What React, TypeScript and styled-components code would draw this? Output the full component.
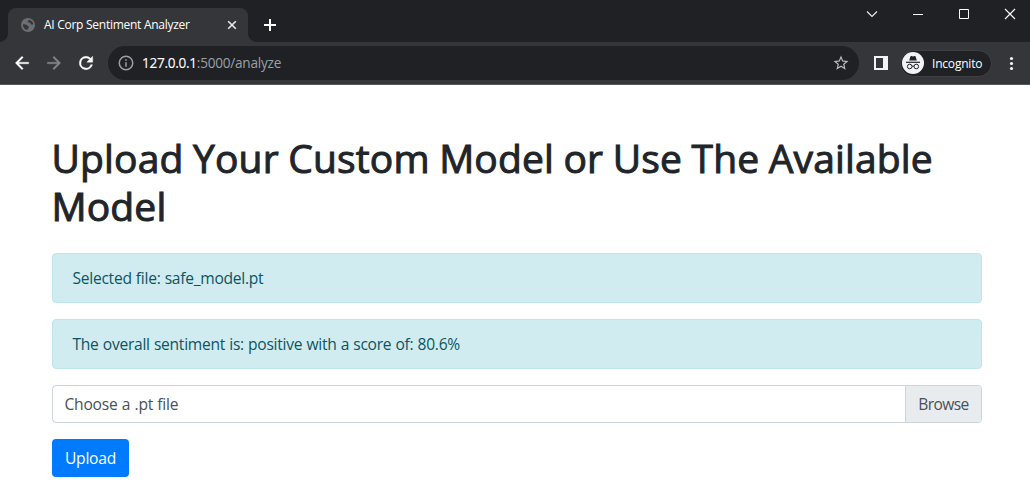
import React from "react";
import styled, { createGlobalStyle } from "styled-components";

const GlobalStyle = createGlobalStyle`
  * { box-sizing: border-box; }
  body { margin: 0; background: #fff; font-family: "Segoe UI", "Open Sans", "Noto Sans", sans-serif; }
`;

const Window = styled.div`
  width: 1030px;
  height: 499px;
  overflow: hidden;
  background: #fff;
`;

const TabStrip = styled.header`
  display: flex;
  height: 42px;
  padding-left: 8px;
  background: #202124;
`;

const Tab = styled.div`
  position: relative;
  display: flex;
  align-items: center;
  width: 240px;
  height: 34px;
  margin-top: 8px;
  padding: 0 11px 0 13px;
  border-radius: 8px 8px 0 0;
  background: #35363a;
  color: #fff;
  &::before,
  &::after {
    content: "";
    position: absolute;
    bottom: 0;
    width: 8px;
    height: 8px;
  }
  &::before {
    left: -8px;
    background: radial-gradient(circle at 0 0, #202124 7.5px, #35363a 8px);
  }
  &::after {
    right: -8px;
    background: radial-gradient(circle at 100% 0, #202124 7.5px, #35363a 8px);
  }
`;

const TabTitle = styled.span`
  flex: 1;
  margin-left: 9px;
  font-size: 12px;
  line-height: 16px;
  letter-spacing: -0.27px;
  white-space: nowrap;
`;

const NewTab = styled.div`
  display: flex;
  margin: 19px 0 0 16px;
`;

const WindowControls = styled.div`
  display: flex;
  align-items: flex-start;
  gap: 34px;
  margin: 8px 14px 0 auto;
`;

const Toolbar = styled.nav`
  display: flex;
  align-items: center;
  height: 43px;
  padding: 0 9px 0 12px;
  border-bottom: 1px solid #55565a;
  background: #35363a;
`;

const NavButtons = styled.div`
  display: flex;
  gap: 12px;
`;

const AddressBar = styled.div`
  display: flex;
  align-items: center;
  width: 751px;
  height: 34px;
  margin-left: 12px;
  padding: 0 9px;
  border-radius: 17px;
  background: #202124;
`;

const Url = styled.span`
  flex: 1;
  margin-left: 7px;
  color: #9aa0a6;
  font-size: 13.6px;
  line-height: 20px;
  letter-spacing: -0.24px;
  b {
    color: #fff;
    font-weight: 400;
    letter-spacing: -0.28px;
    -webkit-text-stroke: 0.1px #fff;
  }
`;

const Profile = styled.div`
  display: flex;
  align-items: center;
  width: 92px;
  height: 27px;
  margin-left: 12px;
  padding-left: 1px;
  border: 1px solid #3f4044;
  border-radius: 14px;
  background: #202124;
  color: #fff;
  font-size: 12px;
  white-space: nowrap;
`;

const ProfileName = styled.span`
  margin-left: 8px;
  letter-spacing: -0.2px;
`;

const PanelIcon = styled.svg`
  margin-left: 15px;
`;

const MenuIcon = styled.svg`
  margin-left: auto;
`;

const Page = styled.main`
  width: 930px;
  margin: 49px 0 0 52px;
`;

const Title = styled.h1`
  margin: 0 -10px 23px -0.5px;
  color: #212529;
  font-size: 39px;
  font-weight: 400;
  line-height: 48px;
  letter-spacing: 0.15px;
  word-spacing: -0.8px;
  -webkit-text-stroke: 1px #212529;
`;

const Alert = styled.div`
  height: 50px;
  margin-bottom: 16px;
  padding: 12px 19.5px;
  border: 1px solid #bee5eb;
  border-radius: 4px;
  background: #d1ecf1;
  color: #0c5460;
  font-size: 15.6px;
  line-height: 25px;
  letter-spacing: -0.27px;
  word-spacing: 0.4px;
`;

const FileInput = styled.div`
  display: flex;
  height: 38px;
  margin-bottom: 16px;
  overflow: hidden;
  border: 1px solid #ced4da;
  border-radius: 4px;
  color: #495057;
  font-size: 15.6px;
  line-height: 37px;
`;

const FileLabel = styled.span`
  flex: 1;
  padding-left: 11.5px;
  letter-spacing: -0.23px;
  word-spacing: 0.5px;
`;

const Browse = styled.span`
  width: 76px;
  border-left: 1px solid #ced4da;
  background: #e9ecef;
  text-align: center;
  letter-spacing: -0.6px;
`;

const UploadButton = styled.button`
  width: 77px;
  height: 38px;
  padding: 0;
  border: 0;
  border-radius: 4px;
  background: #007bff;
  color: #fff;
  font: inherit;
  font-size: 15.6px;
  letter-spacing: -0.2px;
`;

const Material = ({ d, size = 20, color = "#fff", weight = 0 }: { d: string; size?: number; color?: string; weight?: number }) => (
  <svg width={size} height={size} viewBox="0 0 24 24" fill={color} stroke={color} strokeWidth={weight}>
    <path d={d} />
  </svg>
);

export default function App() {
  return (
    <>
      <GlobalStyle />
      <Window>
        <TabStrip>
          <Tab>
            <svg width="14" height="14" viewBox="0 0 14 14">
              <circle cx="7" cy="7" r="7" fill="#6b6e73" />
              <path d="M1.8 6.2 4.6 6.4q1.3.3 1.6 1.2.3.7 1.3.8.8.2.4 1L7 10.6q-.2.9-.9 1.5Q2.4 11.3 1.8 6.2ZM8.6 2Q6.6 2.3 6.7 3.6q.2 1 1.5.9 1.2 0 1.3 1.1.2 1.1 1.3 1l1.5-.2Q11.8 3 8.6 2Z" fill="#35363a" />
            </svg>
            <TabTitle>AI Corp Sentiment Analyzer</TabTitle>
            <svg width="10" height="10" viewBox="0 0 10 10" stroke="#e8eaed" strokeWidth="1.6">
              <path d="m1.2 1.2 7.6 7.6m0-7.6L1.2 8.8" />
            </svg>
          </Tab>
          <NewTab>
            <svg width="12" height="12" viewBox="0 0 12 12" stroke="#fff" strokeWidth="2">
              <path d="M6 0v12M0 6h12" />
            </svg>
          </NewTab>
          <WindowControls>
            <svg width="12" height="12" viewBox="0 0 12 12" fill="none" stroke="#f1f1f1" strokeWidth="1.1"><path d="m1 3.5 5 5 5-5" /></svg>
            <svg width="12" height="12" viewBox="0 0 12 12" stroke="#fff"><path d="M1 6.5h10" /></svg>
            <svg width="12" height="12" viewBox="0 0 12 12" fill="none" stroke="#fff"><path d="M1.5 1.5h9v9h-9z" /></svg>
            <svg width="12" height="12" viewBox="0 0 12 12" stroke="#fff" strokeWidth="1.1"><path d="m1 1 10 10m0-10L1 11" /></svg>
          </WindowControls>
        </TabStrip>
        <Toolbar>
          <NavButtons>
            <Material weight={0.4} d="M20 11H7.83l5.59-5.59L12 4l-8 8 8 8 1.41-1.41L7.83 13H20v-2z" />
            <Material weight={0.4} color="#85868a" d="m12 4-1.41 1.41L16.17 11H4v2h12.17l-5.58 5.59L12 20l8-8z" />
            <Material weight={0.5} d="M17.65 6.35A7.96 7.96 0 0 0 12 4a8 8 0 1 0 7.73 10h-2.08A6 6 0 1 1 12 6c1.66 0 3.14.69 4.22 1.78L13 11h7V4l-2.35 2.35z" />
          </NavButtons>
          <AddressBar>
            <Material size={18} color="#9aa0a6" d="M11 7h2v2h-2zm0 4h2v6h-2zm1-9a10 10 0 1 0 0 20 10 10 0 0 0 0-20zm0 18a8 8 0 1 1 0-16 8 8 0 0 1 0 16z" />
            <Url><b>127.0.0.1</b>:5000/analyze</Url>
            <Material size={18} color="#b8bbbf" d="m22 9.24-7.19-.62L12 2 9.19 8.63 2 9.24l5.46 4.73L5.82 21 12 17.27 18.18 21l-1.63-7.03L22 9.24zM12 15.4l-3.76 2.27 1-4.28-3.32-2.88 4.38-.38L12 6.1l1.71 4.04 4.38.38-3.32 2.88 1 4.28L12 15.4z" />
          </AddressBar>
          <PanelIcon width="14" height="14" viewBox="0 0 14 14" fill="#f1f3f4"><path fillRule="evenodd" d="M0 0h14v14H0zM2 2v10h7V2z" /></PanelIcon>
          <Profile>
            <svg width="22" height="22" viewBox="0 0 22 22">
              <circle cx="11" cy="11" r="11" fill="#f1f3f4" />
              <path d="M7.2 8.4 8.4 4.5q.3-.8 1-.5l1.6.4 1.6-.4q.8-.2 1 .5l1.2 3.9z" fill="#202124" />
              <path d="M4 10.3h14" stroke="#202124" strokeWidth="1.2" />
              <g fill="none" stroke="#202124"><circle cx="7.7" cy="14.5" r="2.3" /><circle cx="14.3" cy="14.5" r="2.3" /><path d="M10 14.3q1-.6 2 0" /></g>
            </svg>
            <ProfileName>Incognito</ProfileName>
          </Profile>
          <MenuIcon width="20" height="20" viewBox="0 0 20 20" fill="#f1f3f4">
            <circle cx="10.5" cy="5.5" r="1.6" /><circle cx="10.5" cy="10.5" r="1.6" /><circle cx="10.5" cy="15.5" r="1.6" />
          </MenuIcon>
        </Toolbar>
        <Page>
          <Title>Upload Your Custom Model or Use The Available Model</Title>
          <Alert>Selected file: safe_model.pt</Alert>
          <Alert>The overall sentiment is: positive with a score of: 80.6%</Alert>
          <FileInput>
            <FileLabel>Choose a .pt file</FileLabel>
            <Browse>Browse</Browse>
          </FileInput>
          <UploadButton>Upload</UploadButton>
        </Page>
      </Window>
    </>
  );
}
